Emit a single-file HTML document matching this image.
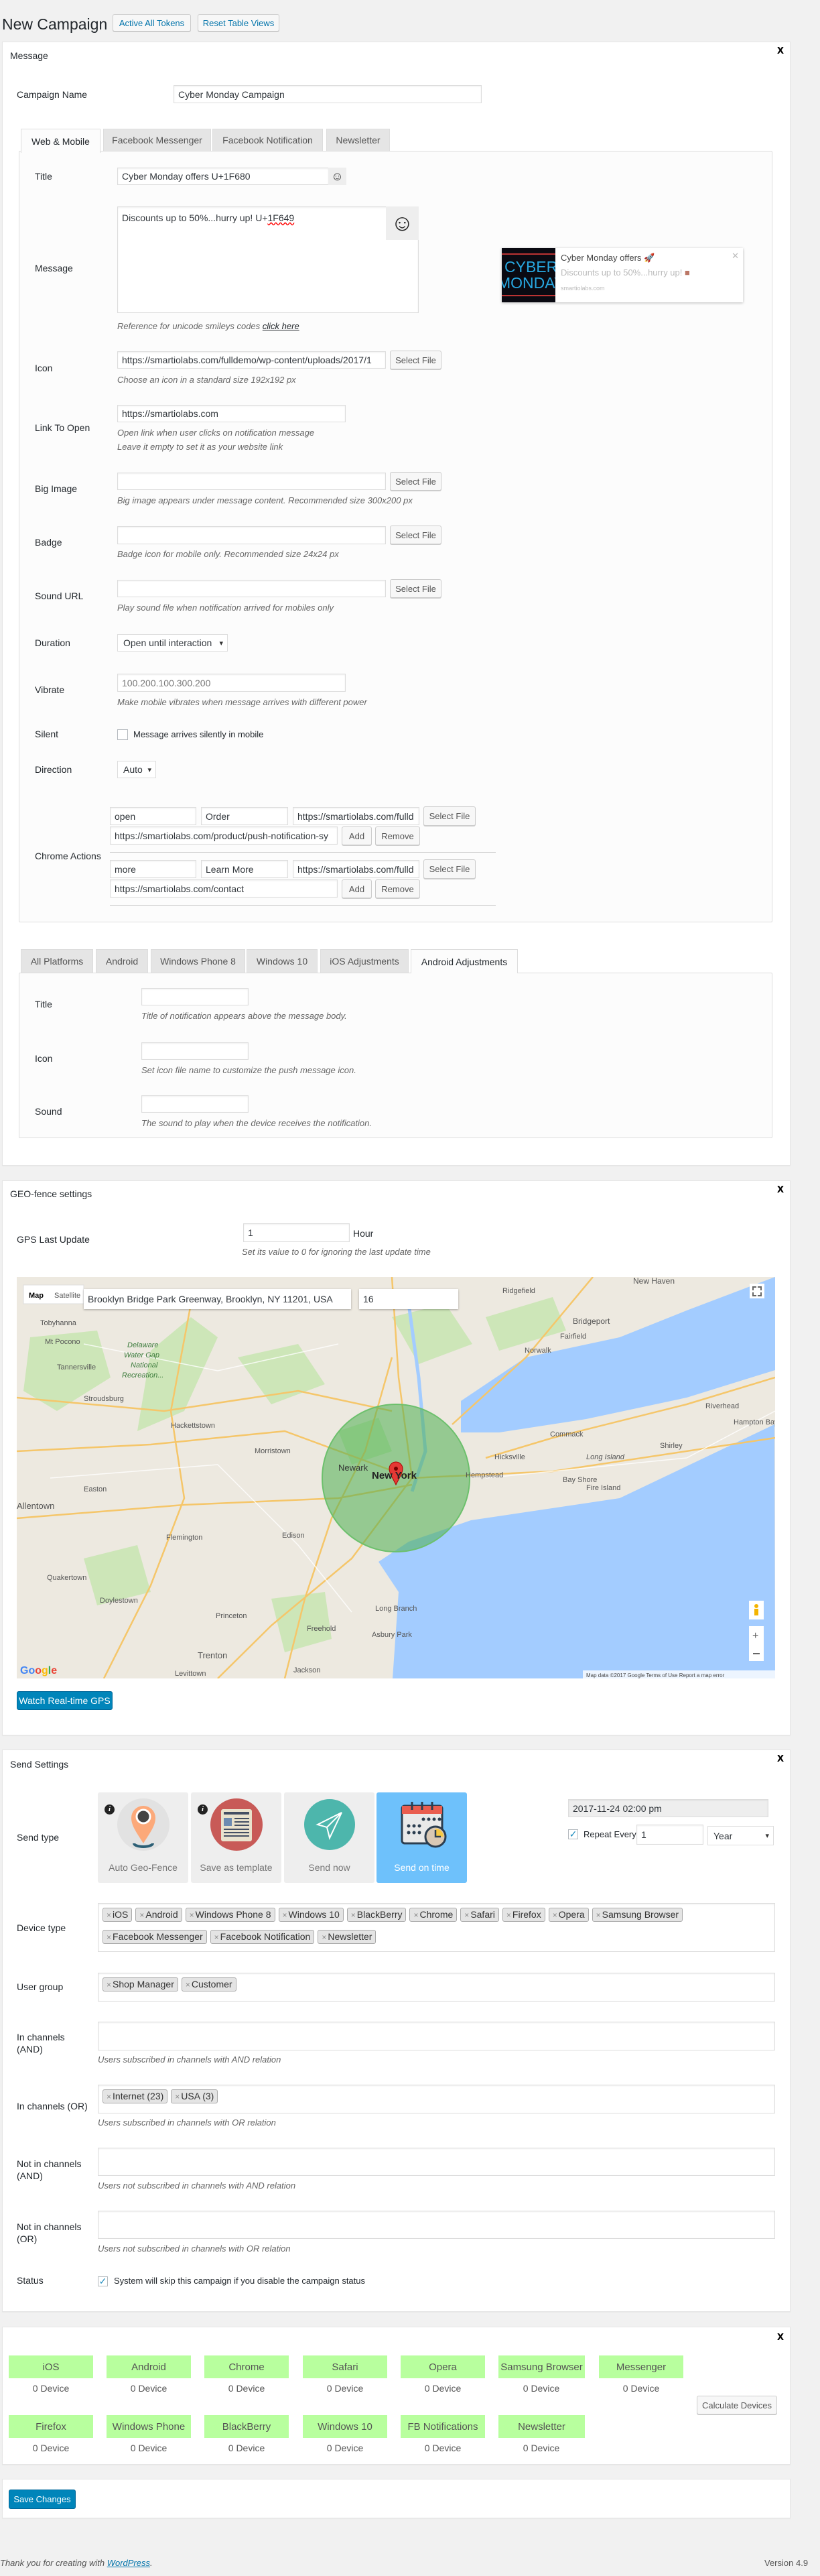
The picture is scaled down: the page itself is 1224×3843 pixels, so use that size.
<!DOCTYPE html>
<html><head><meta charset="utf-8"><style>
*{box-sizing:border-box;margin:0;padding:0}
body{width:1224px;height:3843px;background:#f1f1f1;position:relative;font-family:"Liberation Sans",Arial,sans-serif;color:#23282d;overflow:hidden}
.a{position:absolute}
.t{position:absolute;font-size:14px;line-height:18px;white-space:nowrap;color:#23282d}
.h{position:absolute;font-size:13px;line-height:16px;font-style:italic;color:#666;white-space:nowrap}
.panel{position:absolute;left:3px;width:1177px;background:#fff;border:1px solid #e5e5e5;box-shadow:0 1px 1px rgba(0,0,0,.04)}
.in{position:absolute;background:#fff;border:1px solid #ddd;box-shadow:inset 0 1px 2px rgba(0,0,0,.07);font-size:14px;color:#32373c;padding-left:6px;white-space:nowrap;overflow:hidden;display:flex;align-items:center}
.btn{position:absolute;background:#f7f7f7;border:1px solid #ccc;border-radius:3px;box-shadow:0 1px 0 #ccc;font-size:13px;color:#555;display:flex;align-items:center;justify-content:center;white-space:nowrap}
.x{position:absolute;font-size:18px;font-weight:bold;color:#000;right:10px}
.tab{position:absolute;background:#e5e5e5;border:1px solid #ddd;border-bottom:none;font-size:14px;color:#555;display:flex;align-items:center;justify-content:center}
.tab.on{background:#fcfcfc;color:#23282d;height:36px!important}
.box{position:absolute;background:#fcfcfc;border:1px solid #ddd;border-radius:2px}
.sel{position:absolute;background:#fff;border:1px solid #ddd;font-size:14px;color:#32373c;padding-left:8px;display:flex;align-items:center}
.sel:after{content:"▾";position:absolute;right:6px;font-size:11px;color:#333}
.chip{display:inline-block;background:#e4e4e4;border:1px solid #aaa;border-radius:3px;font-size:14px;line-height:18px;padding:0 5px;margin:0 5px 12px 0;color:#333}
.chip b{font-weight:normal;color:#888;font-size:12px;margin-right:2px}
.tb{position:absolute;top:6px;left:6px;right:6px}
.g{position:absolute;background:#b8ff9e;width:126px;height:34px;font-size:15px;color:#555;display:flex;align-items:center;justify-content:center}
.dv{position:absolute;width:126px;text-align:center;font-size:14px;color:#555}
.tile{position:absolute;top:2674px;width:135px;height:135px;background:#eee;border-radius:3px}
.tile span{position:absolute;left:0;right:0;top:104px;text-align:center;font-size:14px;color:#777}
.info{position:absolute;left:10px;top:18px;width:15px;height:15px;border-radius:50%;background:#222;color:#fff;font:bold italic 11px/15px "Liberation Serif",serif;text-align:center}
</style></head><body>

<div class="a" style="left:3px;top:20px;font-size:23px;line-height:32px;color:#23282d">New Campaign</div>
<div class="btn" style="left:168px;top:21px;width:117px;height:26px;color:#0073aa">Active All Tokens</div>
<div class="btn" style="left:295px;top:21px;width:122px;height:26px;color:#0073aa">Reset Table Views</div>

<!-- MESSAGE PANEL -->
<div class="panel" style="top:62px;height:1677px"></div>
<div class="x" style="left:1160px;top:64px">x</div>
<div class="t" style="left:15px;top:74px">Message</div>
<div class="t" style="left:25px;top:132px">Campaign Name</div>
<div class="in" style="left:259px;top:127px;width:460px;height:27px">Cyber Monday Campaign</div>

<div class="box" style="left:28px;top:225px;width:1125px;height:1151px"></div>
<div class="tab on" style="left:31px;top:192px;width:119px;height:33px">Web &amp; Mobile</div>
<div class="tab" style="left:154px;top:192px;width:161px;height:33px">Facebook Messenger</div>
<div class="tab" style="left:317px;top:192px;width:165px;height:33px">Facebook Notification</div>
<div class="tab" style="left:487px;top:192px;width:95px;height:33px">Newsletter</div>

<div class="t" style="left:52px;top:254px">Title</div>
<div class="in" style="left:175px;top:250px;width:316px;height:26px">Cyber Monday offers U+1F680</div>
<div class="a" style="left:490px;top:250px;width:27px;height:26px;background:#eee;font-size:18px;text-align:center;line-height:26px;color:#333">☺</div>

<div class="t" style="left:52px;top:391px">Message</div>
<div class="in" style="left:175px;top:308px;width:450px;height:159px;align-items:flex-start;padding-top:8px">Discounts up to 50%...hurry up! U+<span style="text-decoration:underline wavy red">1F649</span></div>
<div class="a" style="left:576px;top:308px;width:49px;height:50px;background:#eee;font-size:34px;text-align:center;line-height:50px;color:#222">☺</div>

<div class="a" style="left:749px;top:370px;width:360px;height:81px;background:#fff;box-shadow:0 1px 4px rgba(0,0,0,.25)">
 <div class="a" style="left:0;top:0;width:80px;height:81px;background:#0a0a12;overflow:hidden">
  <div class="a" style="left:0;top:8px;width:80px;height:2px;background:#b33"></div>
  <div class="a" style="left:4px;top:16px;font-size:23px;line-height:25px;color:#27a7e0">CYBER</div>
  <div class="a" style="left:-6px;top:40px;font-size:23px;line-height:25px;color:#27a7e0">MONDAY</div>
  <div class="a" style="left:0;top:70px;width:80px;height:2px;background:#b33"></div>
 </div>
 <div class="a" style="left:88px;top:7px;font-size:13px;color:#444">Cyber Monday offers 🚀</div>
 <div class="a" style="left:88px;top:29px;font-size:13px;color:#bbb">Discounts up to 50%...hurry up! <span style="color:#b76">■</span></div>
 <div class="a" style="left:88px;top:55px;font-size:9px;color:#bbb">smartiolabs.com</div>
 <div class="a" style="right:6px;top:4px;font-size:13px;color:#bbb">✕</div>
</div>

<div class="h" style="left:175px;top:479px">Reference for unicode smileys codes <span style="color:#23282d;text-decoration:underline">click here</span></div>

<div class="t" style="left:52px;top:540px">Icon</div>
<div class="in" style="left:175px;top:524px;width:401px;height:26px">https://smartiolabs.com/fulldemo/wp-content/uploads/2017/1</div>
<div class="btn" style="left:582px;top:523px;width:77px;height:28px">Select File</div>
<div class="h" style="left:175px;top:559px">Choose an icon in a standard size 192x192 px</div>

<div class="t" style="left:52px;top:629px">Link To Open</div>
<div class="in" style="left:175px;top:604px;width:341px;height:26px">https://smartiolabs.com</div>
<div class="h" style="left:175px;top:638px">Open link when user clicks on notification message</div>
<div class="h" style="left:175px;top:659px">Leave it empty to set it as your website link</div>

<div class="t" style="left:52px;top:720px">Big Image</div>
<div class="in" style="left:175px;top:705px;width:401px;height:26px"></div>
<div class="btn" style="left:582px;top:704px;width:77px;height:28px">Select File</div>
<div class="h" style="left:175px;top:739px">Big image appears under message content. Recommended size 300x200 px</div>

<div class="t" style="left:52px;top:800px">Badge</div>
<div class="in" style="left:175px;top:785px;width:401px;height:27px"></div>
<div class="btn" style="left:582px;top:784px;width:77px;height:28px">Select File</div>
<div class="h" style="left:175px;top:819px">Badge icon for mobile only. Recommended size 24x24 px</div>

<div class="t" style="left:52px;top:880px">Sound URL</div>
<div class="in" style="left:175px;top:865px;width:401px;height:26px"></div>
<div class="btn" style="left:582px;top:864px;width:77px;height:28px">Select File</div>
<div class="h" style="left:175px;top:899px">Play sound file when notification arrived for mobiles only</div>

<div class="t" style="left:52px;top:950px">Duration</div>
<div class="sel" style="left:175px;top:946px;width:165px;height:26px">Open until interaction</div>

<div class="t" style="left:52px;top:1020px">Vibrate</div>
<div class="in" style="left:175px;top:1005px;width:341px;height:27px;color:#777">100.200.100.300.200</div>
<div class="h" style="left:175px;top:1040px">Make mobile vibrates when message arrives with different power</div>

<div class="t" style="left:52px;top:1086px">Silent</div>
<div class="a" style="left:175px;top:1088px;width:16px;height:16px;border:1px solid #b4b9be;background:#fff"></div>
<div class="t" style="left:199px;top:1087px;font-size:13px">Message arrives silently in mobile</div>

<div class="t" style="left:52px;top:1139px">Direction</div>
<div class="sel" style="left:175px;top:1135px;width:58px;height:26px">Auto</div>

<div class="t" style="left:52px;top:1268px">Chrome Actions</div>
<div class="in" style="left:164px;top:1204px;width:129px;height:27px">open</div>
<div class="in" style="left:300px;top:1204px;width:130px;height:27px">Order</div>
<div class="in" style="left:437px;top:1204px;width:189px;height:27px">https://smartiolabs.com/fulld</div>
<div class="btn" style="left:632px;top:1203px;width:78px;height:29px">Select File</div>
<div class="in" style="left:164px;top:1233px;width:340px;height:27px">https://smartiolabs.com/product/push-notification-sy</div>
<div class="btn" style="left:510px;top:1233px;width:45px;height:28px">Add</div>
<div class="btn" style="left:560px;top:1233px;width:67px;height:28px">Remove</div>
<div class="a" style="left:164px;top:1271px;width:576px;height:1px;background:#ccc"></div>
<div class="in" style="left:164px;top:1283px;width:129px;height:27px">more</div>
<div class="in" style="left:300px;top:1283px;width:130px;height:27px">Learn More</div>
<div class="in" style="left:437px;top:1283px;width:189px;height:27px">https://smartiolabs.com/fulld</div>
<div class="btn" style="left:632px;top:1282px;width:78px;height:29px">Select File</div>
<div class="in" style="left:164px;top:1312px;width:340px;height:27px">https://smartiolabs.com/contact</div>
<div class="btn" style="left:510px;top:1312px;width:45px;height:28px">Add</div>
<div class="btn" style="left:560px;top:1312px;width:67px;height:28px">Remove</div>
<div class="a" style="left:164px;top:1350px;width:576px;height:1px;background:#ccc"></div>

<!-- platform tabs -->
<div class="box" style="left:28px;top:1451px;width:1125px;height:247px"></div>
<div class="tab" style="left:31px;top:1416px;width:108px;height:35px">All Platforms</div>
<div class="tab" style="left:143px;top:1416px;width:78px;height:35px">Android</div>
<div class="tab" style="left:225px;top:1416px;width:141px;height:35px">Windows Phone 8</div>
<div class="tab" style="left:368px;top:1416px;width:106px;height:35px">Windows 10</div>
<div class="tab" style="left:478px;top:1416px;width:132px;height:35px">iOS Adjustments</div>
<div class="tab on" style="left:613px;top:1416px;width:160px;height:35px">Android Adjustments</div>

<div class="t" style="left:52px;top:1489px">Title</div>
<div class="in" style="left:211px;top:1474px;width:160px;height:26px"></div>
<div class="h" style="left:211px;top:1508px">Title of notification appears above the message body.</div>
<div class="t" style="left:52px;top:1570px">Icon</div>
<div class="in" style="left:211px;top:1555px;width:160px;height:26px"></div>
<div class="h" style="left:211px;top:1589px">Set icon file name to customize the push message icon.</div>
<div class="t" style="left:52px;top:1649px">Sound</div>
<div class="in" style="left:211px;top:1634px;width:160px;height:26px"></div>
<div class="h" style="left:211px;top:1668px">The sound to play when the device receives the notification.</div>

<!-- GEO PANEL -->
<div class="panel" style="top:1761px;height:828px"></div>
<div class="x" style="left:1160px;top:1763px">x</div>
<div class="t" style="left:15px;top:1772px">GEO-fence settings</div>
<div class="t" style="left:25px;top:1840px">GPS Last Update</div>
<div class="in" style="left:363px;top:1825px;width:159px;height:28px">1</div>
<div class="t" style="left:527px;top:1831px">Hour</div>
<div class="h" style="left:361px;top:1860px">Set its value to 0 for ignoring the last update time</div>

<svg class="a" style="left:25px;top:1905px" width="1132" height="599" viewBox="0 0 1132 599">
<rect width="1132" height="599" fill="#ede9e0"/>
<g fill="#cde6b8">
<path d="M200 110 L260 60 L300 90 L250 200 L180 230 Z"/>
<path d="M20 90 L120 80 L140 150 L60 200 L10 170 Z"/>
<path d="M330 120 L420 100 L460 160 L380 190 Z"/>
<path d="M560 60 L640 40 L680 100 L600 130 Z"/>
<path d="M100 420 L180 400 L200 470 L120 490 Z"/>
<path d="M380 480 L460 470 L470 540 L400 560 Z"/>
<path d="M700 60 L800 30 L820 80 L720 110 Z"/>
<path d="M480 230 L540 210 L560 260 L500 280 Z"/>
</g>
<path d="M663 185 L760 120 L900 90 L1000 50 L1132 0 L1132 139 L1000 180 L850 212 L720 232 L663 232 Z" fill="#a3ccff"/>
<path d="M561 599 L570 470 L540 425 L585 395 L678 363 L900 330 L1131 220 L1132 599 Z" fill="#a3ccff"/>
<path d="M585 40 L600 150 L610 260 L590 320" stroke="#a3ccff" stroke-width="5" fill="none"/>
<g stroke="#f5c66a" stroke-width="2.5" fill="none">
<path d="M0 260 L200 250 L400 230 L590 300 L800 290 L1132 240"/>
<path d="M0 360 L250 340 L480 330 L590 310"/>
<path d="M0 180 L220 200 L420 170 L560 200"/>
<path d="M590 300 L500 420 L380 520 L300 599"/>
<path d="M560 0 L570 150 L590 300"/>
<path d="M700 270 L800 240 L1000 190 L1132 150"/>
<path d="M130 599 L200 460 L250 330 L230 200 L260 40"/>
<path d="M860 0 L760 120 L650 220"/>
<path d="M400 599 L430 480 L470 360 L520 260 L560 120"/>
</g>
<g stroke="#fff" stroke-width="1.5" fill="none" opacity=".8">
<path d="M50 300 L300 280 L420 400 L500 500"/>
<path d="M100 100 L300 140 L480 100"/>
<path d="M700 300 L1000 270 L1132 200"/>
</g>
<circle cx="566" cy="300" r="110" fill="#4caf50" fill-opacity=".55" stroke="#6cc06c" stroke-width="2"/>
<path d="M566 310 C560 298 556 292 556 286 A10 10 0 0 1 576 286 C576 292 572 298 566 310 Z" fill="#e53935" stroke="#a00" stroke-width="1"/>
<circle cx="566" cy="286" r="3" fill="#700"/>
<g font-family="Liberation Sans,sans-serif" font-size="11" fill="#555">
<text x="480" y="289" font-size="13" fill="#333">Newark</text>
<text x="530" y="301" font-size="15" font-weight="bold" fill="#222">New York</text>
<text x="355" y="263">Morristown</text><text x="230" y="225">Hackettstown</text>
<text x="100" y="185">Stroudsburg</text><text x="100" y="320">Easton</text>
<text x="0" y="346" font-size="13">Allentown</text><text x="223" y="392">Flemington</text>
<text x="396" y="389">Edison</text><text x="297" y="509">Princeton</text>
<text x="270" y="569" font-size="13">Trenton</text><text x="236" y="595">Levittown</text>
<text x="124" y="486">Doylestown</text><text x="45" y="452">Quakertown</text>
<text x="535" y="498">Long Branch</text><text x="530" y="537">Asbury Park</text>
<text x="433" y="528">Freehold</text><text x="413" y="590">Jackson</text>
<text x="670" y="299">Hempstead</text><text x="713" y="272">Hicksville</text>
<text x="796" y="238">Commack</text><text x="815" y="306">Bay Shore</text>
<text x="850" y="272" font-style="italic">Long Island</text><text x="960" y="255">Shirley</text>
<text x="1028" y="196">Riverhead</text><text x="1070" y="220">Hampton Bay</text>
<text x="758" y="113">Norwalk</text><text x="811" y="92">Fairfield</text>
<text x="830" y="70" font-size="12">Bridgeport</text><text x="920" y="10" font-size="12">New Haven</text>
<text x="725" y="24">Ridgefield</text><text x="35" y="72">Tobyhanna</text>
<text x="42" y="100">Mt Pocono</text><text x="60" y="138">Tannersville</text>
<text x="165" y="105" font-style="italic" fill="#3a7a3a">Delaware</text>
<text x="160" y="120" font-style="italic" fill="#3a7a3a">Water Gap</text>
<text x="170" y="135" font-style="italic" fill="#3a7a3a">National</text>
<text x="157" y="150" font-style="italic" fill="#3a7a3a">Recreation...</text>
<text x="850" y="318">Fire Island</text>
</g>
<rect x="10" y="12" width="90" height="28" fill="#fff" stroke="#ddd"/>
<text x="18" y="31" font-family="Liberation Sans" font-size="11" font-weight="bold" fill="#000">Map</text>
<text x="56" y="31" font-family="Liberation Sans" font-size="11" fill="#555">Satellite</text>
<rect x="1094" y="10" width="22" height="22" fill="#fff"/>
<path d="M1099 20v-5h5M1111 20v-5h-5M1099 23v5h5M1111 23v5h-5" stroke="#666" stroke-width="2" fill="none"/>
<rect x="1093" y="483" width="22" height="28" fill="#fff"/>
<circle cx="1104" cy="491" r="3" fill="#f4b400"/><rect x="1101" y="495" width="6" height="10" fill="#f4b400"/>
<rect x="1093" y="521" width="22" height="52" fill="#fff"/>
<text x="1098" y="540" font-size="16" fill="#666" font-family="Liberation Sans">+</text>
<rect x="1099" y="561" width="10" height="2" fill="#666"/>
<text x="5" y="592" font-family="Liberation Sans" font-size="16" font-weight="bold" fill="#4285f4">Go<tspan fill="#ea4335">o</tspan><tspan fill="#fbbc05">g</tspan><tspan fill="#34a853">l</tspan><tspan fill="#ea4335">e</tspan></text>
<rect x="845" y="587" width="287" height="12" fill="#fff" fill-opacity=".8"/>
<text x="850" y="597" font-family="Liberation Sans" font-size="8" fill="#444">Map data ©2017 Google   Terms of Use   Report a map error</text>
</svg>
<div class="in" style="left:125px;top:1923px;width:399px;height:30px;border:none;box-shadow:0 1px 3px rgba(0,0,0,.3)">Brooklyn Bridge Park Greenway, Brooklyn, NY 11201, USA</div>
<div class="in" style="left:536px;top:1923px;width:148px;height:30px;border:none;box-shadow:0 1px 3px rgba(0,0,0,.3)">16</div>
<div class="a" style="left:25px;top:2523px;width:143px;height:28px;background:#0085ba;border:1px solid #006799;border-radius:3px;color:#fff;font-size:14px;display:flex;align-items:center;justify-content:center">Watch Real-time GPS</div>

<!-- SEND SETTINGS -->
<div class="panel" style="top:2610px;height:839px"></div>
<div class="x" style="left:1160px;top:2612px">x</div>
<div class="t" style="left:15px;top:2623px">Send Settings</div>
<div class="t" style="left:25px;top:2732px">Send type</div>

<div class="tile" style="left:146px"><div class="info">i</div>
<svg class="a" style="left:28px;top:8px" width="80" height="80"><circle cx="40" cy="40" r="39" fill="#e2e2e2"/><path d="M26 68 a14 5 0 1 0 28 0" stroke="#2c5f75" stroke-width="4" fill="none"/><path d="M40 68 C30 52 22 42 22 30 A18 18 0 0 1 58 30 C58 42 50 52 40 68Z" fill="#fca97a"/><circle cx="40" cy="28" r="10" fill="#444" stroke="#fff" stroke-width="3"/></svg>
<span>Auto Geo-Fence</span></div>
<div class="tile" style="left:285px"><div class="info">i</div>
<svg class="a" style="left:28px;top:8px" width="80" height="80"><circle cx="40" cy="40" r="39" fill="#c85a57"/><rect x="17" y="17" width="46" height="48" rx="3" fill="#e9e2cd"/><rect x="21" y="21" width="38" height="4" fill="#444f63"/><rect x="21" y="30" width="12" height="12" fill="#6d8bb1"/><g fill="#444f63"><rect x="37" y="30" width="22" height="2"/><rect x="37" y="35" width="22" height="2"/><rect x="37" y="40" width="22" height="2"/><rect x="21" y="46" width="38" height="2"/><rect x="21" y="51" width="38" height="2"/><rect x="21" y="56" width="38" height="2"/></g></svg>
<span>Save as template</span></div>
<div class="tile" style="left:424px">
<svg class="a" style="left:28px;top:8px" width="80" height="80"><circle cx="40" cy="40" r="38" fill="#4db6ac"/><path d="M58 22 L22 40 L36 44 Z M58 22 L36 44 L40 60 Z" stroke="#fff" stroke-width="2" fill="none"/></svg>
<span>Send now</span></div>
<div class="tile" style="left:562px;background:#6ec1fb">
<svg class="a" style="left:28px;top:6px" width="80" height="84"><rect x="10" y="14" width="60" height="56" rx="4" fill="#e9e9e9" stroke="#2c3e50" stroke-width="3"/><rect x="10" y="14" width="60" height="12" fill="#e95d4f"/><g stroke="#2c3e50" stroke-width="3"><path d="M25 8v12M40 8v12M55 8v12"/></g><g fill="#2c3e50"><circle cx="42" cy="34" r="2.5"/><circle cx="50" cy="34" r="2.5"/><circle cx="58" cy="34" r="2.5"/><circle cx="66" cy="34" r="2.5"/><circle cx="20" cy="44" r="2.5"/><circle cx="28" cy="44" r="2.5"/><circle cx="36" cy="44" r="2.5"/><circle cx="20" cy="54" r="2.5"/><circle cx="28" cy="54" r="2.5"/><circle cx="36" cy="54" r="2.5"/></g><circle cx="60" cy="60" r="15" fill="#d9c8b4" stroke="#2c3e50" stroke-width="3"/><path d="M60 48 A12 12 0 0 1 72 60 L60 60Z" fill="#f6c944"/><path d="M60 50v10h8" stroke="#2c3e50" stroke-width="2.5" fill="none"/></svg>
<span style="color:#fff">Send on time</span></div>

<div class="in" style="left:848px;top:2684px;width:299px;height:27px;background:#eee">2017-11-24 02:00 pm</div>
<div class="a" style="left:848px;top:2729px;width:15px;height:15px;border:1px solid #b4b9be;background:#fff;color:#1e8cbe;font-size:14px;line-height:13px;text-align:center">✓</div>
<div class="t" style="left:871px;top:2728px;font-size:13px">Repeat Every</div>
<div class="in" style="left:950px;top:2722px;width:100px;height:30px">1</div>
<div class="sel" style="left:1056px;top:2724px;width:99px;height:29px">Year</div>

<div class="t" style="left:25px;top:2867px">Device type</div>
<div class="in" style="left:146px;top:2839px;width:1011px;height:73px;display:block;padding:0"><div class="tb">
<span class="chip"><b>×</b>iOS</span><span class="chip"><b>×</b>Android</span><span class="chip"><b>×</b>Windows Phone 8</span><span class="chip"><b>×</b>Windows 10</span><span class="chip"><b>×</b>BlackBerry</span><span class="chip"><b>×</b>Chrome</span><span class="chip"><b>×</b>Safari</span><span class="chip"><b>×</b>Firefox</span><span class="chip"><b>×</b>Opera</span><span class="chip"><b>×</b>Samsung Browser</span><br><span class="chip"><b>×</b>Facebook Messenger</span><span class="chip"><b>×</b>Facebook Notification</span><span class="chip"><b>×</b>Newsletter</span></div></div>

<div class="t" style="left:25px;top:2955px">User group</div>
<div class="in" style="left:146px;top:2943px;width:1011px;height:43px;display:block;padding:0"><div class="tb"><span class="chip"><b>×</b>Shop Manager</span><span class="chip"><b>×</b>Customer</span></div></div>

<div class="t" style="left:25px;top:3030px">In channels</div>
<div class="t" style="left:25px;top:3048px">(AND)</div>
<div class="in" style="left:146px;top:3016px;width:1011px;height:43px"></div>
<div class="h" style="left:146px;top:3065px">Users subscribed in channels with AND relation</div>

<div class="t" style="left:25px;top:3133px">In channels (OR)</div>
<div class="in" style="left:146px;top:3110px;width:1011px;height:43px;display:block;padding:0"><div class="tb"><span class="chip"><b>×</b>Internet (23)</span><span class="chip"><b>×</b>USA (3)</span></div></div>
<div class="h" style="left:146px;top:3159px">Users subscribed in channels with OR relation</div>

<div class="t" style="left:25px;top:3219px">Not in channels</div>
<div class="t" style="left:25px;top:3237px">(AND)</div>
<div class="in" style="left:146px;top:3204px;width:1011px;height:42px"></div>
<div class="h" style="left:146px;top:3253px">Users not subscribed in channels with AND relation</div>

<div class="t" style="left:25px;top:3313px">Not in channels</div>
<div class="t" style="left:25px;top:3331px">(OR)</div>
<div class="in" style="left:146px;top:3298px;width:1011px;height:42px"></div>
<div class="h" style="left:146px;top:3347px">Users not subscribed in channels with OR relation</div>

<div class="t" style="left:25px;top:3393px">Status</div>
<div class="a" style="left:146px;top:3396px;width:15px;height:15px;border:1px solid #b4b9be;background:#fff;color:#1e8cbe;font-size:14px;line-height:13px;text-align:center">✓</div>
<div class="t" style="left:170px;top:3394px;font-size:13px">System will skip this campaign if you disable the campaign status</div>

<!-- DEVICES -->
<div class="panel" style="top:3471px;height:206px"></div>
<div class="x" style="left:1160px;top:3475px">x</div>
<div class="g" style="left:13px;top:3514px">iOS</div><div class="dv" style="left:13px;top:3555px">0 Device</div>
<div class="g" style="left:159px;top:3514px">Android</div><div class="dv" style="left:159px;top:3555px">0 Device</div>
<div class="g" style="left:305px;top:3514px">Chrome</div><div class="dv" style="left:305px;top:3555px">0 Device</div>
<div class="g" style="left:452px;top:3514px">Safari</div><div class="dv" style="left:452px;top:3555px">0 Device</div>
<div class="g" style="left:598px;top:3514px">Opera</div><div class="dv" style="left:598px;top:3555px">0 Device</div>
<div class="g" style="left:744px;top:3514px;width:129px">Samsung Browser</div><div class="dv" style="left:745px;top:3555px">0 Device</div>
<div class="g" style="left:894px;top:3514px">Messenger</div><div class="dv" style="left:894px;top:3555px">0 Device</div>
<div class="g" style="left:13px;top:3603px">Firefox</div><div class="dv" style="left:13px;top:3644px">0 Device</div>
<div class="g" style="left:159px;top:3603px">Windows Phone</div><div class="dv" style="left:159px;top:3644px">0 Device</div>
<div class="g" style="left:305px;top:3603px">BlackBerry</div><div class="dv" style="left:305px;top:3644px">0 Device</div>
<div class="g" style="left:452px;top:3603px">Windows 10</div><div class="dv" style="left:452px;top:3644px">0 Device</div>
<div class="g" style="left:598px;top:3603px">FB Notifications</div><div class="dv" style="left:598px;top:3644px">0 Device</div>
<div class="g" style="left:744px;top:3603px;width:129px">Newsletter</div><div class="dv" style="left:745px;top:3644px">0 Device</div>
<div class="btn" style="left:1040px;top:3574px;width:120px;height:28px">Calculate Devices</div>

<div class="panel" style="top:3698px;height:59px"></div>
<div class="a" style="left:13px;top:3714px;width:100px;height:29px;background:#0085ba;border:1px solid #006799;border-radius:3px;color:#fff;font-size:13px;display:flex;align-items:center;justify-content:center">Save Changes</div>

<div class="h" style="left:0;top:3816px;color:#555">Thank you for creating with <span style="color:#0073aa;text-decoration:underline">WordPress</span>.</div>
<div class="t" style="left:1141px;top:3815px;font-size:13px;color:#555">Version 4.9</div>
</body></html>
